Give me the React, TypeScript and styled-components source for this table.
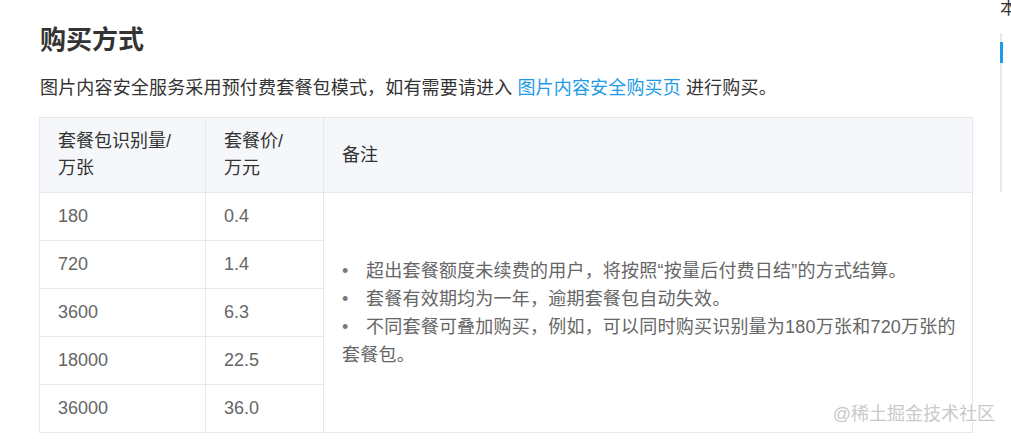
import React from "react";
import styled, { createGlobalStyle } from "styled-components";

const GlobalStyle = createGlobalStyle`
  html, body {
    margin: 0;
    padding: 0;
    background: #ffffff;
  }
  body {
    font-family: "Liberation Sans", "Noto Sans CJK SC", sans-serif;
    color: #333333;
    overflow: hidden;
  }
`;

const Page = styled.div`
  position: relative;
  display: flex;
  width: 1011px;
  height: 439px;
  overflow: hidden;
`;

const Main = styled.main`
  width: 961px;
  padding-left: 39px;
  flex: none;
`;

const Title = styled.h2`
  margin: 22px 0 0 1px;
  font-size: 26px;
  line-height: 36px;
  font-weight: 700;
  color: #333333;
`;

const Intro = styled.p`
  margin: 17px 0 0 1px;
  font-size: 18px;
  line-height: 27px;
  letter-spacing: 0.17px;
  color: #333333;
`;

const Link = styled.a`
  color: #1e9be6;
  text-decoration: none;
  margin: 0 5px;
`;

const Table = styled.table`
  margin-top: 15px;
  width: 934px;
  border-collapse: collapse;
  table-layout: fixed;
  font-size: 18px;
  line-height: 27px;
`;

const HeadCell = styled.th`
  background: #f5f7fa;
  border: 1px solid #e4e7ec;
  padding: 10px 18px;
  text-align: left;
  font-weight: 400;
  color: #333333;
  vertical-align: middle;
`;

const Cell = styled.td<{ $note?: boolean }>`
  border: 1px solid #e4e7ec;
  padding: ${(p) => (p.$note ? "10px 8px 10px 18px" : "10px 18px")};
  color: #666666;
  vertical-align: middle;
`;

const NoteList = styled.ul`
  margin: 0;
  padding: 0;
  list-style: none;
  line-height: 28px;
  letter-spacing: 0.22px;
  color: #666666;
`;

const NoteItem = styled.li`
  &::before {
    content: "•";
    display: inline-block;
    width: 24px;
    color: #777777;
  }
`;

const Aside = styled.aside`
  width: 11px;
  flex: none;
  overflow: hidden;
  display: flex;
  flex-direction: column;
`;

const AsideLabel = styled.div`
  font-size: 17px;
  line-height: 17px;
  color: #333333;
  white-space: nowrap;
`;

const Track = styled.div`
  margin-top: 16px;
  width: 2px;
  height: 159px;
  background: #e8e8e8;
  position: relative;
`;

const Thumb = styled.div`
  position: absolute;
  top: 9px;
  left: 0;
  width: 3px;
  height: 21px;
  background: #1e9be6;
`;

const Watermark = styled.div`
  position: absolute;
  right: 16px;
  bottom: 15px;
  font-size: 18px;
  line-height: 20px;
  color: #c9c9c9;
  text-shadow: 0 0 2px #ffffff, 0 0 2px #ffffff, 0 0 2px #ffffff;
  white-space: nowrap;
`;

const rows = [
  ["180", "0.4"],
  ["720", "1.4"],
  ["3600", "6.3"],
  ["18000", "22.5"],
  ["36000", "36.0"],
];

export default function App() {
  return (
    <>
      <GlobalStyle />
      <Page>
        <Main>
          <Title>购买方式</Title>
          <Intro>
            图片内容安全服务采用预付费套餐包模式，如有需要请进入
            <Link href="#">图片内容安全购买页</Link>
            进行购买。
          </Intro>
          <Table>
            <colgroup>
              <col style={{ width: 166 }} />
              <col style={{ width: 118 }} />
              <col />
            </colgroup>
            <thead>
              <tr>
                <HeadCell>
                  套餐包识别量/
                  <br />
                  万张
                </HeadCell>
                <HeadCell>
                  套餐价/
                  <br />
                  万元
                </HeadCell>
                <HeadCell>备注</HeadCell>
              </tr>
            </thead>
            <tbody>
              {rows.map(([amount, price], i) => (
                <tr key={amount}>
                  <Cell>{amount}</Cell>
                  <Cell>{price}</Cell>
                  {i === 0 && (
                    <Cell $note rowSpan={5}>
                      <NoteList>
                        <NoteItem>超出套餐额度未续费的用户，将按照“按量后付费日结”的方式结算。</NoteItem>
                        <NoteItem>套餐有效期均为一年，逾期套餐包自动失效。</NoteItem>
                        <NoteItem>不同套餐可叠加购买，例如，可以同时购买识别量为180万张和720万张的套餐包。</NoteItem>
                      </NoteList>
                    </Cell>
                  )}
                </tr>
              ))}
            </tbody>
          </Table>
        </Main>
        <Aside>
          <AsideLabel>本页目录</AsideLabel>
          <Track>
            <Thumb />
          </Track>
        </Aside>
        <Watermark>@稀土掘金技术社区</Watermark>
      </Page>
    </>
  );
}
